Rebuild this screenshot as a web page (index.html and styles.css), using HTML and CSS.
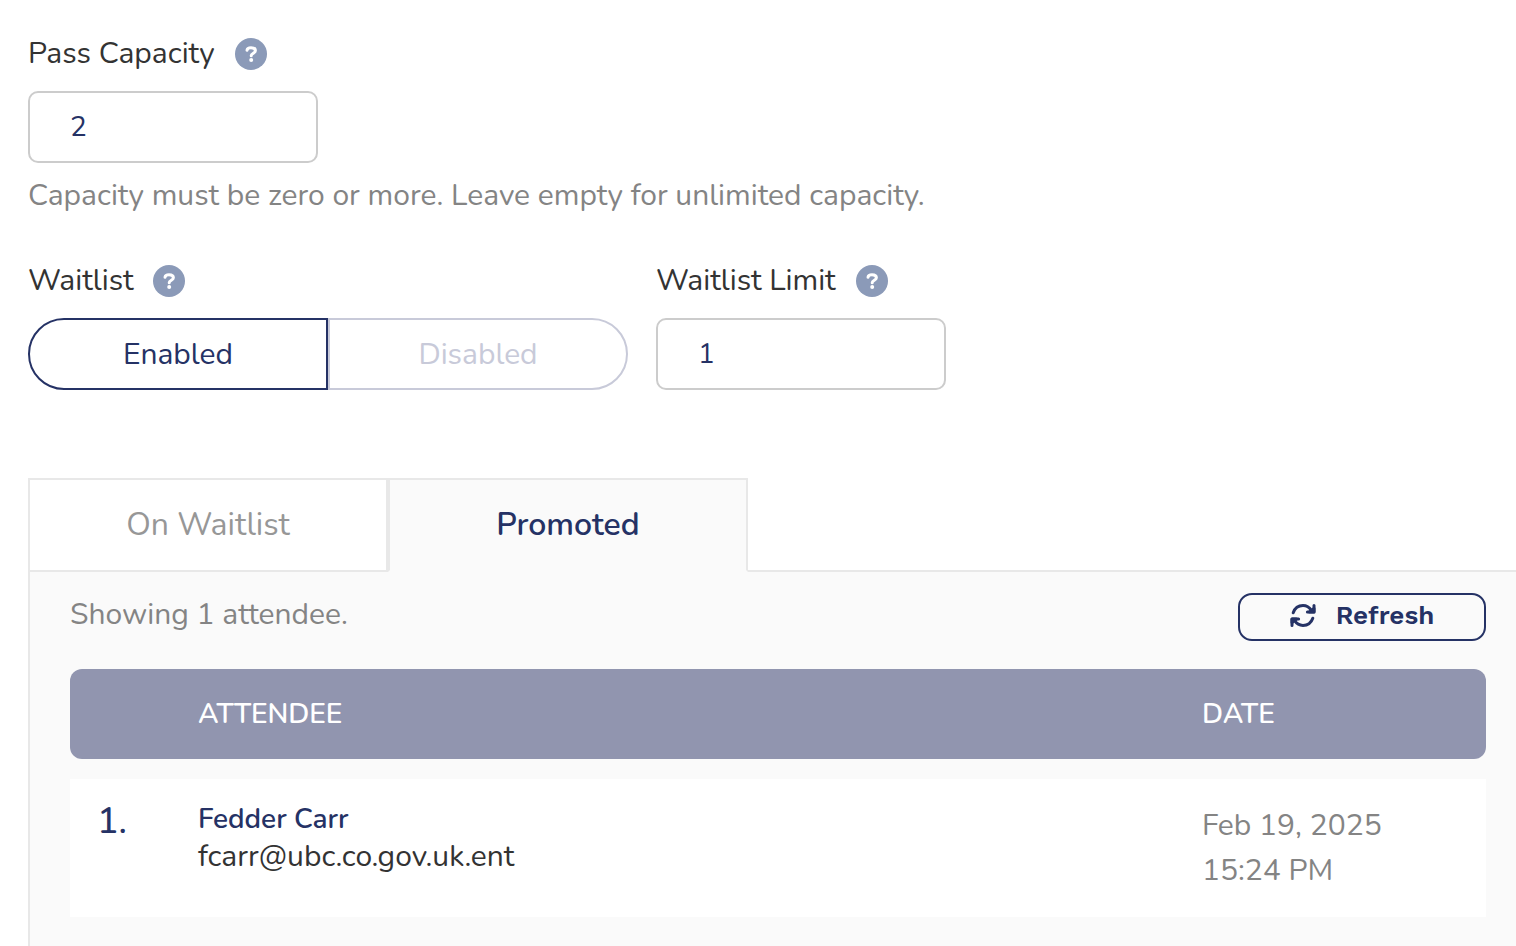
FILE: index.html
```html
<!DOCTYPE html>
<html lang="en">
<head>
<meta charset="utf-8">
<meta name="viewport" content="width=device-width, initial-scale=1">
<title>Pass Capacity</title>
<link rel="stylesheet" href="styles.css">
</head>
<body>
<main class="page">
  <section class="field">
    <div class="field-head">
      <label for="capacity">Pass Capacity</label>
      <button class="help" type="button" aria-label="About pass capacity">
        <svg class="help-icon" viewBox="0 0 32 32" aria-hidden="true"><path d="M12 12.2C12.3 10.2 13.8 9.7 16 9.7C18.6 9.7 20.4 10.7 20.4 12.7C20.4 15.2 16.2 15.2 16.2 17.8"/><circle cx="16.2" cy="22" r="2"/></svg>
      </button>
    </div>
    <input class="text-input" id="capacity" type="text" inputmode="numeric" value="2">
    <p class="hint">Capacity must be zero or more. Leave empty for unlimited capacity.</p>
  </section>

  <div class="field-row">
    <section class="field">
      <div class="field-head">
        <span id="waitlist-label">Waitlist</span>
        <button class="help" type="button" aria-label="About the waitlist">
          <svg class="help-icon" viewBox="0 0 32 32" aria-hidden="true"><path d="M12 12.2C12.3 10.2 13.8 9.7 16 9.7C18.6 9.7 20.4 10.7 20.4 12.7C20.4 15.2 16.2 15.2 16.2 17.8"/><circle cx="16.2" cy="22" r="2"/></svg>
        </button>
      </div>
      <div class="segmented" role="radiogroup" aria-labelledby="waitlist-label">
        <input class="segment-input" type="radio" name="waitlist" id="enabled" checked>
        <label class="segment" for="enabled">Enabled</label>
        <input class="segment-input" type="radio" name="waitlist" id="disabled">
        <label class="segment" for="disabled">Disabled</label>
      </div>
    </section>
    <section class="field">
      <div class="field-head">
        <label for="limit">Waitlist Limit</label>
        <button class="help" type="button" aria-label="About the waitlist limit">
          <svg class="help-icon" viewBox="0 0 32 32" aria-hidden="true"><path d="M12 12.2C12.3 10.2 13.8 9.7 16 9.7C18.6 9.7 20.4 10.7 20.4 12.7C20.4 15.2 16.2 15.2 16.2 17.8"/><circle cx="16.2" cy="22" r="2"/></svg>
        </button>
      </div>
      <input class="text-input" id="limit" type="text" inputmode="numeric" value="1">
    </section>
  </div>

  <div class="tabs" role="tablist">
    <button class="tab" type="button" role="tab" aria-selected="false">On Waitlist</button>
    <button class="tab tab-active" type="button" role="tab" aria-selected="true">Promoted</button>
  </div>
  <section class="panel">
    <div class="toolbar">
      <p class="summary">Showing 1 attendee.</p>
      <button class="refresh" type="button">
        <svg class="refresh-icon" viewBox="0 0 26 26" aria-hidden="true">
          <path d="M3.2 10.8C4.8 6.3 8.400 3.600 13 3.600C16.400 3.600 19.300 5.200 21.600 8.600M22.800 16.200C21.200 20.700 17.600 23.400 13 23.400C9.600 23.400 6.700 21.800 4.400 18.400"/>
          <path d="M24 3.400V10H17.400M2 23.600V17H8.600"/>
          <path class="refresh-head" d="M24 6.500V10H19.500zM2 20.500V17H6.500z"/>
        </svg>
        <span>Refresh</span>
      </button>
    </div>
    <table class="attendees">
      <thead>
        <tr>
          <th class="col-number" aria-label="Number"></th>
          <th>ATTENDEE</th>
          <th class="col-date">DATE</th>
        </tr>
      </thead>
      <tbody>
        <tr>
          <td class="number">1.</td>
          <td class="person"><a class="name" href="#">Fedder Carr</a><span class="email">fcarr@ubc.co.gov.uk.ent</span></td>
          <td class="date">Feb 19, 2025<br>15:24 PM</td>
        </tr>
      </tbody>
    </table>
  </section>
</main>
</body>
</html>
```

FILE: styles.css
```css
* {
  box-sizing: border-box;
}

body {
  margin: 0;
  background: #fff;
  color: #333;
  font-family: Nunito, Lato, sans-serif;
  font-size: 30px;
  line-height: 40px;
}

p {
  margin: 0;
}

button,
input {
  font: inherit;
}

button {
  cursor: pointer;
}

.page {
  display: flex;
  flex-direction: column;
  min-height: 100vh;
  padding: 38px 0 0 28px;
}

.field-head {
  display: flex;
  align-items: center;
  gap: 20px;
  height: 32px;
  margin-bottom: 21px;
}

.help {
  width: 32px;
  height: 32px;
  padding: 0;
  border: 0;
  border-radius: 50%;
  background: #8b9ab8;
  color: #fff;
}

.help-icon {
  display: block;
  width: 32px;
  height: 32px;
}

.help-icon path {
  fill: none;
  stroke: currentColor;
  stroke-width: 3;
  stroke-linecap: round;
}

.help-icon circle {
  fill: currentColor;
}

.text-input {
  display: block;
  width: 290px;
  height: 72px;
  padding: 0 40px;
  border: 2px solid #ccc;
  border-radius: 10px;
  background: #fff;
  color: #253265;
  font-size: 28px;
}

.hint {
  margin-top: 13px;
  color: #848484;
}

.field-row {
  display: flex;
  gap: 28px;
  margin-top: 49px;
}

.segmented {
  display: flex;
  width: 600px;
}

.segment-input {
  position: absolute;
  opacity: 0;
}

.segment {
  flex: 1;
  height: 72px;
  border: 2px solid #c8cad9;
  color: #c8cad9;
  line-height: 70px;
  text-align: center;
  cursor: pointer;
}

.segment:first-of-type {
  border-radius: 36px 0 0 36px;
}

.segment:last-of-type {
  border-radius: 0 36px 36px 0;
}

.segment-input:checked + .segment {
  border-color: #253265;
  color: #253265;
}

.tabs {
  display: flex;
  position: relative;
  margin-top: 88px;
}

.tab {
  width: 360px;
  height: 94px;
  margin-bottom: -2px;
  padding: 0;
  border: 2px solid #e8e8e8;
  background: #fff;
  color: #979797;
  font-size: 32px;
}

.tab-active {
  border-bottom-color: #fafafa;
  background: #fafafa;
  color: #253265;
  font-weight: 600;
}

.panel {
  flex: 1;
  padding: 21px 30px 8px 40px;
  border: solid #e8e8e8;
  border-width: 2px 0 0 2px;
  background: #fafafa;
}

.toolbar {
  display: flex;
  justify-content: space-between;
}

.summary {
  color: #848484;
  line-height: 44px;
}

.refresh {
  display: flex;
  align-items: center;
  justify-content: center;
  gap: 20px;
  width: 248px;
  height: 48px;
  padding: 0 0 4px;
  border: 2px solid #253265;
  border-radius: 14px;
  background: transparent;
  color: #253265;
  font-family: "Work Sans", Inter, sans-serif;
  font-size: 26px;
  font-weight: 600;
}

.refresh-icon {
  width: 26px;
  height: 26px;
  fill: none;
  stroke: currentColor;
  stroke-width: 3;
  stroke-linecap: round;
  stroke-linejoin: round;
}

.refresh-head {
  fill: currentColor;
}

.attendees {
  width: 100%;
  margin-top: 8px;
  border-spacing: 0 20px;
  table-layout: fixed;
}

th {
  height: 90px;
  padding: 0;
  background: #9195af;
  color: #fff;
  font-size: 28px;
  font-weight: 600;
  text-align: left;
}

th:first-child {
  border-radius: 12px 0 0 12px;
}

th:last-child {
  border-radius: 0 12px 12px 0;
}

.col-number {
  width: 128px;
}

.col-date {
  width: 284px;
}

td {
  height: 138px;
  padding: 21px 0;
  background: #fff;
  vertical-align: top;
}

.number {
  padding-left: 27px;
  color: #253265;
  font-size: 36px;
  font-weight: 500;
  line-height: 44px;
}

.name,
.email {
  display: block;
  line-height: 38px;
}

.name {
  color: #253265;
  font-size: 28px;
  font-weight: 600;
  text-decoration: none;
}

.date {
  padding-top: 24px;
  color: #848484;
  line-height: 45px;
}
```
